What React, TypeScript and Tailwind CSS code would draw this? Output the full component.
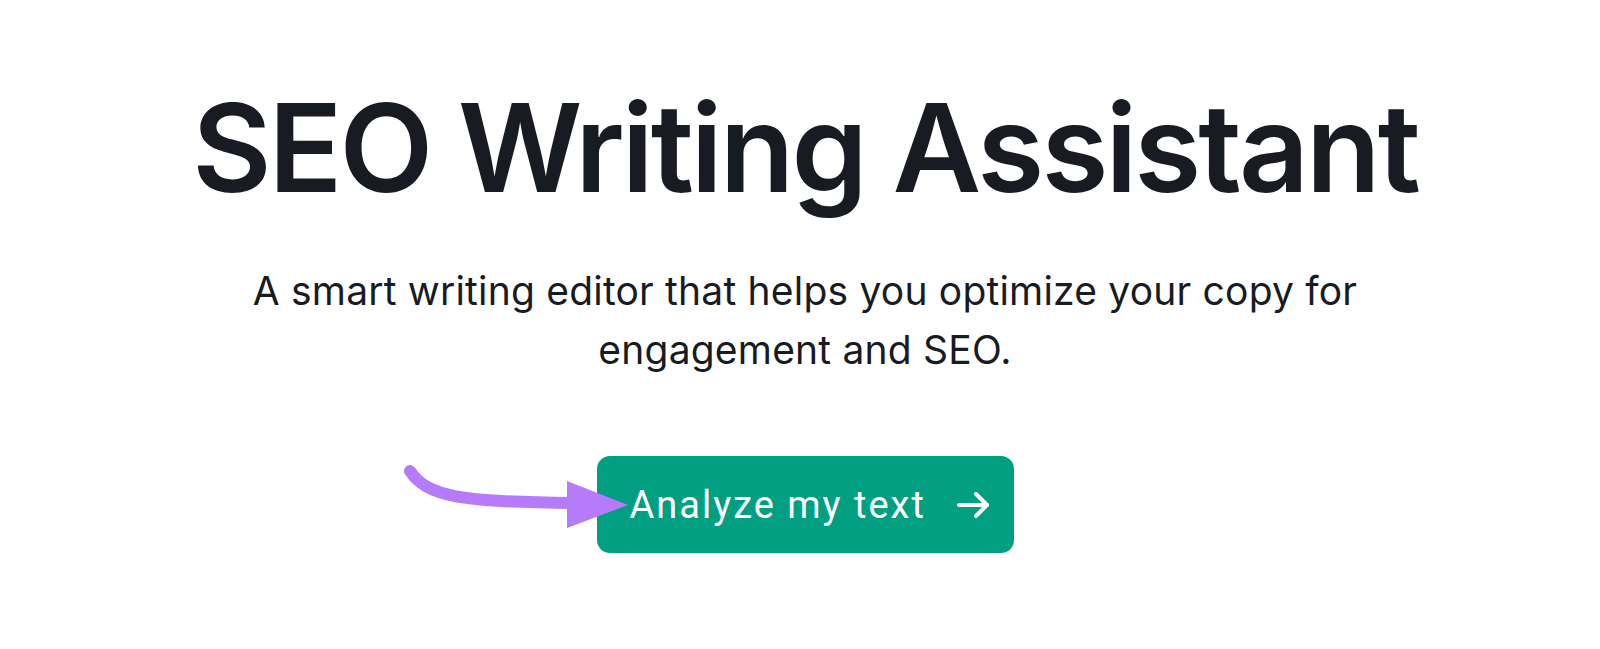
export default function App() {
  return (
    <div className="w-[1600px] h-[649px] bg-white flex flex-col items-center pl-[10px] pt-[73px]" style={{ fontFamily: 'Inter, "Noto Sans", sans-serif' }}>
      <h1 className="text-[122px] leading-[150px] font-semibold text-[#191b23] tracking-[-3px] whitespace-nowrap">
        SEO Writing Assistant
      </h1>
      <p className="mt-[38px] max-w-[1150px] text-center text-[39px] leading-[59px] tracking-[0.2px] text-[#191b23]">
        A smart writing editor that helps you optimize your copy for engagement and SEO.
      </p>
      <div className="relative mt-[77px]">
        <svg className="absolute left-[-195px] top-[5px]" width="230" height="75" viewBox="0 0 230 75">
          <path d="M8 10 C 25 36, 60 41, 170 42" fill="none" stroke="#b57bfb" strokeWidth="12" strokeLinecap="round" />
          <polygon points="165,20 226,44 165,67" fill="#b57bfb" />
        </svg>
        <button className="w-[417px] h-[97px] rounded-[13px] bg-[#009f81] flex items-center pl-[33px] pr-[24px] justify-between text-white" style={{ fontFamily: 'Roboto, sans-serif' }}>
          <span className="text-[38px] leading-none tracking-[2px]">Analyze my text</span>
          <svg width="34" height="26" viewBox="0 0 34 26" fill="none" stroke="white" strokeWidth="4" strokeLinecap="round" strokeLinejoin="round">
            <path d="M3 13 H31" />
            <path d="M20 2 L31 13 L20 24" />
          </svg>
        </button>
      </div>
    </div>
  );
}
